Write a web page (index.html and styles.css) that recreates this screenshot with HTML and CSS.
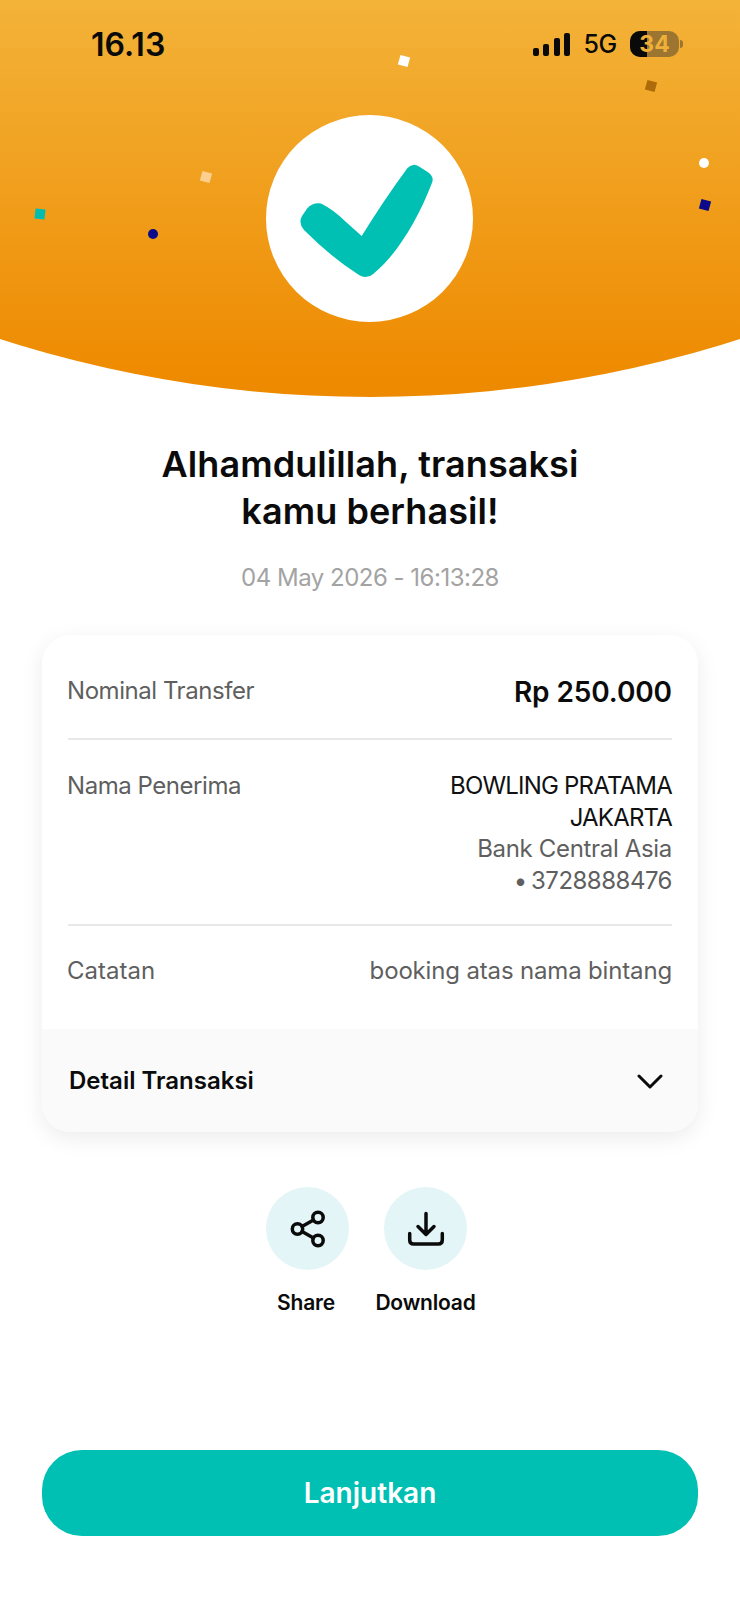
FILE: index.html
```html
<!DOCTYPE html>
<html lang="en">
<head>
    <meta charset="UTF-8">
    <meta name="viewport" content="width=device-width, initial-scale=1.0">
    <title>Transaksi Berhasil</title>
    <link rel="stylesheet" href="styles.css">
</head>
<body>
    <div class="page">
        <header class="hero">
            <div class="status-bar">
                <span class="time">16.13</span>
                <div class="status-right">
                    <div class="signal">
                        <i class="bar-1"></i><i class="bar-2"></i><i class="bar-3"></i><i class="bar-4"></i>
                    </div>
                    <span class="network">5G</span>
                    <div class="battery">
                        <div class="battery-body"><div class="battery-fill"></div><span class="battery-text">34</span></div>
                        <div class="battery-cap"></div>
                    </div>
                </div>
            </div>

            <!-- confetti -->
            <span class="bit bit-white"></span>
            <span class="bit bit-brown"></span>
            <span class="bit bit-peach"></span>
            <span class="bit bit-teal"></span>
            <span class="bit bit-navy"></span>
            <span class="dot dot-navy"></span>
            <span class="dot dot-white"></span>

            <div class="check-circle">
                <svg class="check-icon" viewBox="0 0 206 206" aria-hidden="true">
                    <path d="M95.700 121 Q118 85 141.300 53.300 Q147 47 153 51.500 L161.300 56.700 Q168 61 166.300 67 C152 105 130 140 109.700 156.700 Q101.500 165 93 160 Q66 143 38 115 Q32 108 36 101 L41.300 93.300 Q47 87 55 88.500 Q68 95 79.700 106.700 Z" fill="#00bfb3"/>
                </svg>
            </div>
        </header>

        <h1 class="title">Alhamdulillah, transaksi<br>kamu berhasil!</h1>
        <p class="date">04 May 2026 - 16:13:28</p>

        <section class="card">
            <div class="row row-amount">
                <span class="label">Nominal Transfer</span>
                <span class="amount">Rp 250.000</span>
            </div>
            <div class="row row-receiver">
                <span class="label">Nama Penerima</span>
                <div class="value">
                    <div class="dark">BOWLING PRATAMA<br>JAKARTA</div>
                    <div class="bank">Bank Central Asia</div>
                    <div class="account">&bull; 3728888476</div>
                </div>
            </div>
            <div class="row row-note">
                <span class="label note-label">Catatan</span>
                <span class="value note-value">booking atas nama bintang</span>
            </div>
            <div class="detail">
                <span>Detail Transaksi</span>
                <svg class="chevron" viewBox="0 0 26 16" aria-hidden="true">
                    <path d="M2 3 L13 14 L24 3" fill="none" stroke="#0b0b0b" stroke-width="3" stroke-linecap="round" stroke-linejoin="round"/>
                </svg>
            </div>
        </section>

        <div class="actions">
            <div class="action action-share">
                <div class="action-circle">
                    <svg viewBox="0 0 40 40" aria-hidden="true">
                        <circle cx="30" cy="8.500" r="5.200" />
                        <circle cx="9.500" cy="20" r="5.200" />
                        <circle cx="30" cy="31.500" r="5.200" />
                        <path d="M14 17.500 L25.500 11 M14 22.500 L25.500 29" />
                    </svg>
                </div>
                <span class="share-label">Share</span>
            </div>
            <div class="action action-download">
                <div class="action-circle">
                    <svg viewBox="0 0 40 40" aria-hidden="true">
                        <path d="M20 4.500 V25.500 M12 17.500 L20 25.500 L28 17.500" />
                        <path d="M3.700 24.500 V31 Q3.700 35 7.700 35 H32.300 Q36.300 35 36.300 31 V24.500" />
                    </svg>
                </div>
                <span>Download</span>
            </div>
        </div>

        <button class="next-btn" type="button">Lanjutkan</button>
    </div>
</body>
</html>
```

FILE: styles.css
```css
* {
    box-sizing: border-box;
}

body {
    margin: 0;
    background-color: #fff;
    font-family: Inter, "Open Sans", sans-serif;
    color: #0b0b0b;
}

.page {
    width: 740px;
    height: 1600px;
    overflow: hidden;
}

/* top banner */
.hero {
    position: relative;
    height: 397px;
    padding: 26px 70px 0 91px;
    background: linear-gradient(180deg, #f3b339 0%, #ee8a00 96%);
    clip-path: circle(1209px at 50% -812px);
}

.status-bar {
    display: flex;
    justify-content: space-between;
    align-items: center;
    height: 36px;
    color: #0a0a0a;
}

.time {
    font-size: 32px;
    font-weight: 600;
    letter-spacing: 0;
}

.status-right {
    display: flex;
    align-items: center;
    margin-right: -13px;
}

.signal {
    display: flex;
    align-items: flex-end;
    gap: 4.500px;
    height: 23px;
}

.signal i {
    display: block;
    width: 6px;
    background-color: #0a0a0a;
    border-radius: 2px;
}

.bar-1 { height: 8px; }
.bar-2 { height: 12px; }
.bar-3 { height: 18px; }
.bar-4 { height: 23px; }

.network {
    margin-left: 13px;
    font-size: 25px;
    font-weight: 500;
    letter-spacing: -0.3px;
}

.battery {
    display: flex;
    align-items: center;
    margin-left: 13px;
}

.battery-body {
    position: relative;
    width: 49px;
    height: 26px;
    border-radius: 10px;
    background-color: #9c7530;
    overflow: hidden;
    text-align: center;
}

.battery-fill {
    width: 17px;
    height: 100%;
    background-color: #0a0a0a;
}

.battery-text {
    position: absolute;
    left: 0;
    right: 0;
    top: 0;
    font-size: 23px;
    font-weight: 700;
    line-height: 26px;
    color: #efb03a;
}

.battery-cap {
    width: 3px;
    height: 8px;
    margin-left: 1px;
    border-radius: 0 3px 3px 0;
    background-color: #9c7530;
}

.bit, .dot {
    position: absolute;
    width: 10px;
    height: 10px;
}

.bit {
    transform: rotate(15deg);
}

.dot {
    border-radius: 50%;
}

.bit-white { left: 399px; top: 56px; background-color: #fff; }
.bit-brown { left: 646px; top: 81px; background-color: #ad6b0a; }
.bit-peach { left: 201px; top: 172px; background-color: #fbcf8f; }
.bit-teal { left: 35px; top: 209px; background-color: #00bdb0; transform: rotate(6deg); }
.bit-navy { left: 700px; top: 200px; background-color: #0a0a8a; }
.dot-navy { left: 148px; top: 229px; background-color: #0a0a8a; }
.dot-white { left: 699px; top: 158px; background-color: #fff; }

.check-circle {
    position: absolute;
    left: 266px;
    top: 115px;
    width: 207px;
    height: 207px;
    border-radius: 50%;
    background-color: #fff;
}

.check-icon {
    display: block;
    width: 206px;
    height: 206px;
}

/* heading */
.title {
    margin: 44px 0 0;
    font-size: 36px;
    font-weight: 600;
    line-height: 47px;
    letter-spacing: 0.08px;
    text-align: center;
}

.date {
    margin: 27px 0 0;
    font-size: 24px;
    line-height: 32px;
    color: #a3a3a3;
    text-align: center;
    letter-spacing: -0.5px;
}

/* summary card */
.card {
    margin: 41px 42px 0;
    height: 497px;
    border-radius: 28px;
    background-color: #fff;
    box-shadow: 0 6px 22px rgba(0, 0, 0, 0.08);
    overflow: hidden;
}

.row {
    display: flex;
    justify-content: space-between;
    margin: 0 26px 0 26px;
    font-size: 24px;
    line-height: 31.600px;
    color: #5f5f5f;
    letter-spacing: -0.45px;
}

.row-amount {
    height: 105px;
    padding-top: 40px;
    align-items: flex-start;
    border-bottom: 2px solid #e8e8e8;
}

.label {
    margin-left: -1px;
}

.amount {
    margin-top: 2px;
    font-size: 28px;
    font-weight: 600;
    color: #0b0b0b;
    letter-spacing: -0.1px;
}

.row-receiver {
    height: 186px;
    padding-top: 30px;
    border-bottom: 2px solid #e8e8e8;
}

.row-note {
    height: 103px;
    padding-top: 29px;
}

.value {
    text-align: right;
}

.dark {
    color: #111;
    letter-spacing: -0.8px;
}

.bank {
    letter-spacing: -0.33px;
}

.account {
    word-spacing: -2px;
    letter-spacing: -0.5px;
}

.note-label {
    letter-spacing: 0;
}

.note-value {
    letter-spacing: -0.16px;
}

.detail {
    display: flex;
    justify-content: space-between;
    align-items: center;
    height: 103px;
    padding: 0 35px 0 27px;
    background-color: #fafafa;
    font-size: 24px;
    font-weight: 600;
    letter-spacing: 0;
}

.chevron {
    display: block;
    width: 26px;
    height: 16px;
}

/* share / download */
.actions {
    display: flex;
    justify-content: center;
    margin-top: 55px;
    padding-right: 7px;
    font-size: 21px;
    font-weight: 600;
    letter-spacing: -0.2px;
}

.action {
    display: flex;
    flex-direction: column;
    align-items: center;
    gap: 20px;
    width: 118px;
}

.action-circle {
    display: flex;
    align-items: center;
    justify-content: center;
    width: 83px;
    height: 83px;
    border-radius: 50%;
    background-color: #e3f5f6;
}

.action-circle svg {
    width: 40px;
    height: 40px;
    fill: none;
    stroke: #0b0b0b;
    stroke-width: 3.500;
    stroke-linecap: round;
    stroke-linejoin: round;
}

.share-label {
    margin-right: 3px;
}

.next-btn {
    display: block;
    width: 656px;
    height: 86px;
    margin: 135px 42px 0;
    border: none;
    border-radius: 40px;
    background-color: #00bfb3;
    color: #fff;
    font-family: inherit;
    font-size: 28px;
    font-weight: 600;
}
```
